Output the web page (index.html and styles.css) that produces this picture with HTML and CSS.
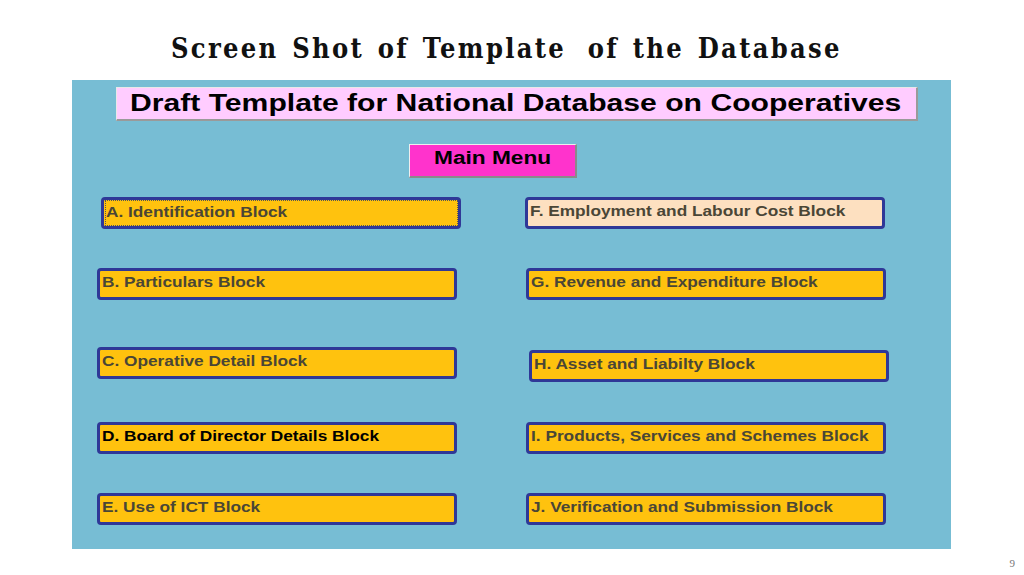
FILE: index.html
```html
<!DOCTYPE html>
<html>
<head>
<meta charset="utf-8">
<link rel="stylesheet" href="styles.css">
</head>
<body>
<div class="slide">
  <h1 class="title">Screen Shot of Template<span class="wide"> </span>of the Database</h1>
  <div class="panel">
    <div class="header"><span class="sx">Draft Template for National Database on Cooperatives</span></div>
    <div class="menu-row"><div class="main-menu"><span class="sx">Main Menu</span></div></div>
    <div class="grid">
      <div class="col left">
        <div class="btn r1 focus"><span class="ring"><span class="sx">A. Identification Block</span></span></div>
        <div class="btn r2"><span class="sx">B. Particulars Block</span></div>
        <div class="btn r3"><span class="sx">C. Operative Detail Block</span></div>
        <div class="btn r4 dark"><span class="sx">D. Board of Director Details Block</span></div>
        <div class="btn r5"><span class="sx">E. Use of ICT Block</span></div>
      </div>
      <div class="col right">
        <div class="btn r1 peach"><span class="sx">F. Employment and Labour Cost Block</span></div>
        <div class="btn r2"><span class="sx">G. Revenue and Expenditure Block</span></div>
        <div class="btn r3 shift"><span class="sx">H. Asset and Liabilty Block</span></div>
        <div class="btn r4"><span class="sx">I. Products, Services and Schemes Block</span></div>
        <div class="btn r5"><span class="sx">J. Verification and Submission Block</span></div>
      </div>
    </div>
  </div>
  <div class="page-num">9</div>
</div>
</body>
</html>
```
FILE: styles.css
```css
* { box-sizing: border-box; }
html, body { margin: 0; padding: 0; background: #ffffff; }
.slide {
  width: 1024px;
  height: 575px;
  position: relative;
  overflow: hidden;
  background: #ffffff;
}
.title {
  margin: 0;
  padding-top: 31px;
  height: 80px;
  padding-left: 171px;
  font-family: "DejaVu Serif Condensed", "DejaVu Serif", serif;
  font-weight: bold;
  font-size: 27px;
  line-height: 36px;
  letter-spacing: 2.3px;
  word-spacing: 3px;
  color: #111111;
  white-space: nowrap;
}
.title .wide { word-spacing: 11px; }
.sx {
  display: inline-block;
  transform-origin: left center;
  white-space: nowrap;
}
.panel {
  margin-left: 72px;
  width: 879px;
  height: 469px;
  background: #77bdd4;
  padding-top: 7px;
}
.header {
  margin-left: 44px;
  width: 802px;
  height: 34px;
  background: #ffccff;
  border: 1px solid #e8e8e8;
  border-right: 2px solid #9a9a9a;
  border-bottom: 2px solid #9a9a9a;
  font-family: "Liberation Sans", Arial, sans-serif;
  font-weight: bold;
  font-size: 23px;
  line-height: 31px;
  padding-left: 13px;
  color: #000000;
  white-space: nowrap;
}
.header .sx { transform: scaleX(1.31); }
.menu-row {
  margin-top: 23px;
  padding-left: 337px;
}
.main-menu {
  width: 168px;
  height: 34px;
  background: #ff33cc;
  border: 1px solid #eeeeee;
  border-right: 2px solid #8a8a8a;
  border-bottom: 2px solid #8a8a8a;
  font-family: "Liberation Sans", Arial, sans-serif;
  font-weight: bold;
  font-size: 18px;
  line-height: 26px;
  padding-left: 24px;
  color: #000000;
}
.main-menu .sx { transform: scaleX(1.26); }
.grid {
  display: flex;
  margin-top: 19px;
}
.col {
  display: flex;
  flex-direction: column;
  width: 360px;
}
.col.left { margin-left: 25px; }
.col.right { margin-left: 68px; }
.btn {
  width: 360px;
  height: 32px;
  background: #ffc20e;
  border: 3.5px solid #2f3897;
  border-radius: 4px;
  font-family: "Liberation Sans", Arial, sans-serif;
  font-weight: bold;
  font-size: 15px;
  line-height: 22px;
  padding-left: 2px;
  color: #4a4636;
  white-space: nowrap;
}
.btn .sx { transform: scaleX(1.15); }
.btn.r2 { margin-top: 39px; }
.btn.r3 { margin-top: 47px; }
.btn.r4 { margin-top: 43px; }
.btn.r5 { margin-top: 39px; }
.left .btn.r1 { margin-left: 4px; }
.right .btn.r2, .right .btn.r4, .right .btn.r5 { margin-left: 1px; }
.right .btn.shift { margin-left: 4px; margin-top: 50px; }
.right .btn.r4 { margin-top: 40px; }
.btn.focus { padding-left: 1px; }
.btn.focus .ring {
  display: block;
  height: 100%;
  border: 1px dotted #555555;
}
.btn.peach { background: #fde0c0; }
.btn.dark { color: #000000; }
.page-num {
  position: absolute;
  right: 9px;
  top: 557px;
  font-family: "Liberation Serif", serif;
  font-size: 11px;
  color: #777777;
}
```
